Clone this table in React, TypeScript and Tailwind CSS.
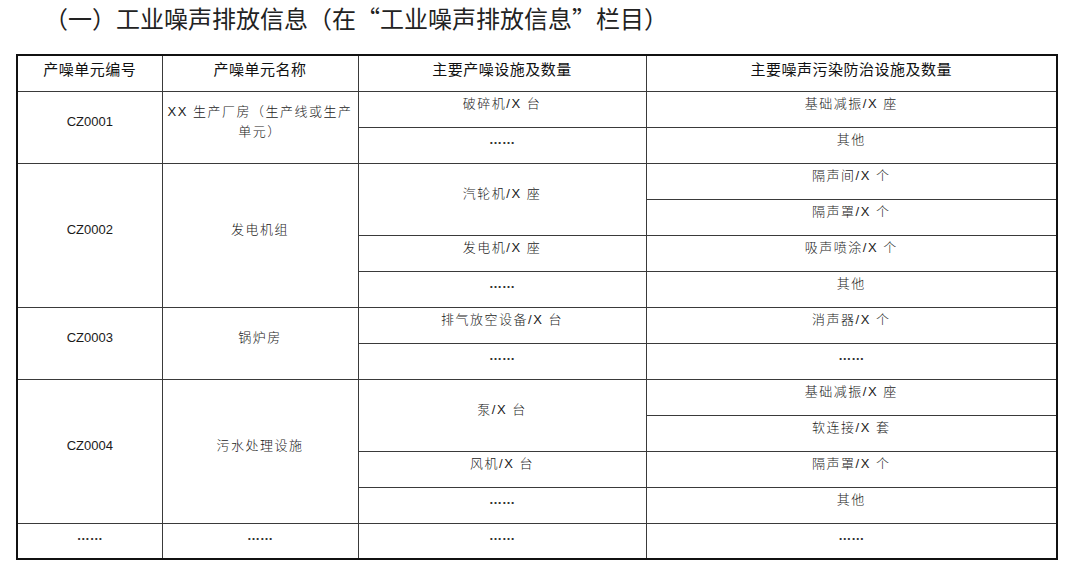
import React from "react";

const cjk = { fontFamily: '"Noto Sans CJK SC", sans-serif' };
const dataFont = { fontFamily: '"Liberation Sans", "Noto Sans CJK SC", sans-serif' };

const B = "border border-[#3a3a3a]";

function H({ children }: { children: React.ReactNode }) {
  return (
    <th className={`${B} align-middle pb-[9px] text-[15px] font-normal text-[#111] tracking-[0.5px]`} style={cjk}>
      {children}
    </th>
  );
}

function D({ children, rowSpan, id }: { children: React.ReactNode; rowSpan?: number; id?: boolean }) {
  return (
    <td
      rowSpan={rowSpan}
      className={`${B} align-middle pb-[11px] text-center text-[#1a1a1a] ${id ? "text-[13px]" : "text-[13px] tracking-[1.5px] font-light"}`}
      style={dataFont}
    >
      {children}
    </td>
  );
}

const E = <span className="tracking-normal font-bold text-[13px] text-[#333]" style={{ fontFamily: '"Liberation Sans", sans-serif' }}>……</span>;

export default function App() {
  return (
    <div className="w-[1080px] h-[585px] bg-white overflow-hidden" style={cjk}>
      <div className="h-[37px] pl-[44px] pt-[2px] text-[24px] leading-[32px] text-[#222]" style={cjk} lang="zh-CN">
        （一）工业噪声排放信息（在“工业噪声排放信息”栏目）
      </div>
      <div className="pt-[17px] pl-[16px]">
        <table className="border-collapse border-2 border-[#111] table-fixed w-[1040px]" lang="zh-CN">
          <colgroup>
            <col className="w-[145px]" />
            <col className="w-[196px]" />
            <col className="w-[288px]" />
            <col className="w-[411px]" />
          </colgroup>
          <thead>
            <tr className="h-[36px]">
              <H>产噪单元编号</H>
              <H>产噪单元名称</H>
              <H>主要产噪设施及数量</H>
              <H>主要噪声污染防治设施及数量</H>
            </tr>
          </thead>
          <tbody>
            <tr className="h-[36px]">
              <D rowSpan={2} id>CZ0001</D>
              <D rowSpan={2}>
                XX 生产厂房（生产线或生产
                <br />
                单元）
              </D>
              <D>破碎机/X 台</D>
              <D>基础减振/X 座</D>
            </tr>
            <tr className="h-[36px]">
              <D>{E}</D>
              <D>其他</D>
            </tr>

            <tr className="h-[36px]">
              <D rowSpan={4} id>CZ0002</D>
              <D rowSpan={4}>发电机组</D>
              <D rowSpan={2}>汽轮机/X 座</D>
              <D>隔声间/X 个</D>
            </tr>
            <tr className="h-[36px]">
              <D>隔声罩/X 个</D>
            </tr>
            <tr className="h-[36px]">
              <D>发电机/X 座</D>
              <D>吸声喷涂/X 个</D>
            </tr>
            <tr className="h-[36px]">
              <D>{E}</D>
              <D>其他</D>
            </tr>

            <tr className="h-[36px]">
              <D rowSpan={2} id>CZ0003</D>
              <D rowSpan={2}>锅炉房</D>
              <D>排气放空设备/X 台</D>
              <D>消声器/X 个</D>
            </tr>
            <tr className="h-[36px]">
              <D>{E}</D>
              <D>{E}</D>
            </tr>

            <tr className="h-[36px]">
              <D rowSpan={4} id>CZ0004</D>
              <D rowSpan={4}>污水处理设施</D>
              <D rowSpan={2}>泵/X 台</D>
              <D>基础减振/X 座</D>
            </tr>
            <tr className="h-[36px]">
              <D>软连接/X 套</D>
            </tr>
            <tr className="h-[36px]">
              <D>风机/X 台</D>
              <D>隔声罩/X 个</D>
            </tr>
            <tr className="h-[36px]">
              <D>{E}</D>
              <D>其他</D>
            </tr>

            <tr className="h-[36px]">
              <D>{E}</D>
              <D>{E}</D>
              <D>{E}</D>
              <D>{E}</D>
            </tr>
          </tbody>
        </table>
      </div>
    </div>
  );
}
